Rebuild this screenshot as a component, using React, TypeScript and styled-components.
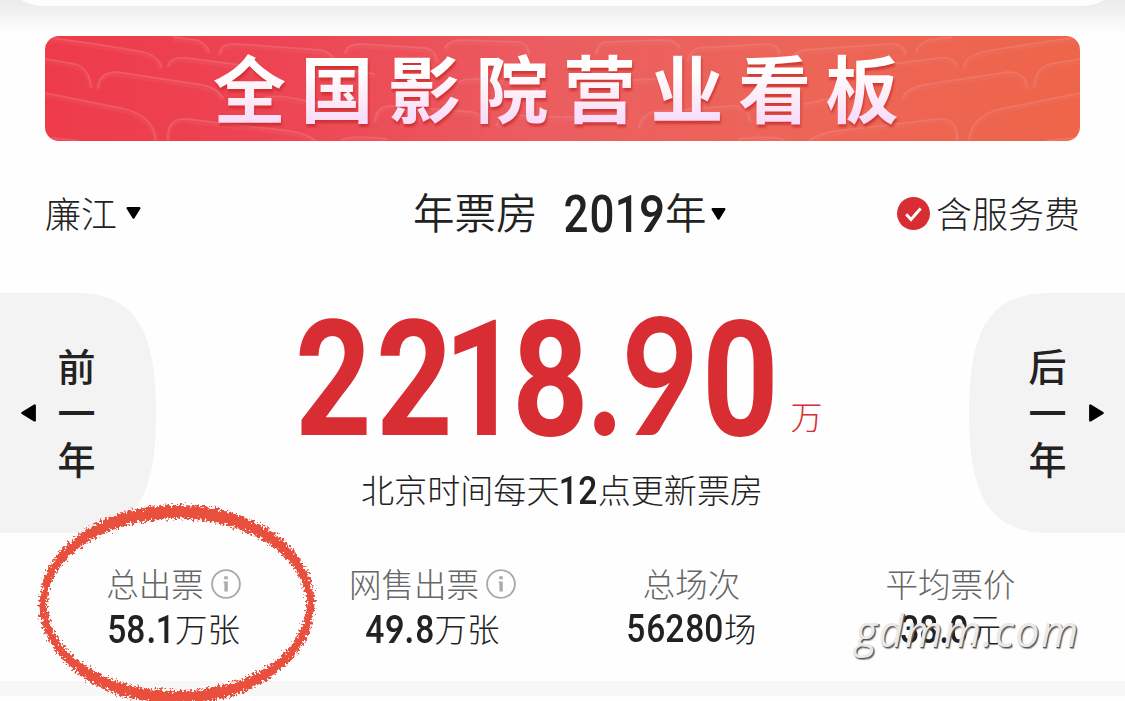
import React from "react";
import styled, { createGlobalStyle, css } from "styled-components";

const GlobalStyle = createGlobalStyle`
  * { box-sizing: border-box; }
  body {
    margin: 0;
    background: #fefefe;
    color: #222;
    font-family: "Noto Sans CJK SC", "Noto Sans", sans-serif;
    font-weight: 300;
    overflow: hidden;
  }
`;

const Page = styled.main`
  position: relative;
  width: 1125px;
  height: 701px;
  overflow: hidden;
  background: #fefefe;
`;

const TopShade = styled.header`
  height: 36px;
  padding: 0 4px;
  background: linear-gradient(#ececec 0, #efefef 8px, #fefefe 34px);
`;

const TopSheet = styled.div`
  height: 6px;
  overflow: hidden;
  display: flex;
  align-items: flex-end;
  &::before {
    content: "";
    flex: 1;
    height: 60px;
    flex-shrink: 0;
    background: #fefefe;
    border-radius: 0 0 38px 38px;
  }
`;

const Banner = styled.section`
  position: relative;
  height: 105px;
  margin: 0 45px;
  border-radius: 14px;
  background: linear-gradient(95deg, #ee3b4a 0%, #ed4453 22%, #eb5d60 48%, #ed6558 72%, #ee6549 100%);
`;

const SeatArt = styled.svg`
  position: absolute;
  inset: 0;
  width: 1035px;
  height: 105px;
  border-radius: 14px;
`;

const BannerTitle = styled.h1`
  position: relative;
  margin: 0;
  padding-left: 168px;
  height: 99px;
  font-size: 73px;
  line-height: 99px;
  font-weight: 700;
  letter-spacing: 14.5px;
  white-space: nowrap;
  color: transparent;
  background: linear-gradient(#fff 35%, #fdeef8 58%, #f9dcfb 85%);
  background-clip: text;
  -webkit-background-clip: text;
  filter: drop-shadow(1px 3px 1px rgba(196, 40, 36, 0.7));
`;

const FilterRow = styled.section`
  height: 152px;
  padding: 0 45px 7px;
  display: grid;
  grid-template-columns: 368px 1fr auto;
  align-items: center;
  line-height: 50px;
  white-space: nowrap;
`;

const Choice = styled.div<{ $size?: number; $weight?: number }>`
  display: flex;
  align-items: center;
  font-size: ${(p) => p.$size ?? 36}px;
  font-weight: ${(p) => p.$weight ?? 300};
`;

/* Han glyphs sit low in their line box; this lifts them onto the row's optical centre. */
const Han = styled.span`
  padding-bottom: 0.11em;
`;

const Gap = styled.span<{ $w: number }>`
  width: ${(p) => p.$w}px;
`;

const Hero = styled.section`
  height: 240px;
  display: grid;
  grid-template-columns: 156px 1fr 156px;
`;

const YearButton = styled.button<{ $side: "left" | "right" }>`
  height: 240px;
  border: 0;
  padding: 0 21px;
  background: #f3f3f3;
  color: #222;
  font: inherit;
  display: flex;
  align-items: center;
  gap: ${(p) => (p.$side === "left" ? 21 : 22)}px;
  clip-path: ${(p) =>
    p.$side === "left"
      ? 'path("M0 0H75C135 0 156 36 156 120C156 204 135 240 75 240H0Z")'
      : 'path("M156 0H81C21 0 0 36 0 120C0 204 21 240 81 240H156Z")'};
  ${(p) =>
    p.$side === "right" &&
    css`
      flex-direction: row-reverse;
    `}
`;

const VerticalLabel = styled.span`
  width: 39px;
  display: flex;
  flex-direction: column;
  align-items: center;
  padding-bottom: 3px;
  font-size: 38px;
  line-height: 46.5px;
  font-weight: 500;
`;

const Total = styled.div`
  display: flex;
  flex-direction: column;
`;

const Amount = styled.div`
  height: 168px;
  padding-left: 137px;
  display: flex;
  align-items: flex-end;
  color: #d72d33;
`;

const AmountUnit = styled.span`
  font-size: 32px;
  line-height: 40px;
  margin: 0 0 26px 10px;
`;

const UpdateNote = styled.div`
  padding-left: 205px;
  height: 60px;
  display: flex;
  align-items: center;
  font-size: 33.1px;
  white-space: nowrap;
`;

const Stats = styled.section`
  height: 148px;
  padding: 26px 44px 0;
  display: grid;
  grid-template-columns: repeat(4, 259px);
  white-space: nowrap;
`;

const Stat = styled.div`
  display: flex;
  flex-direction: column;
  align-items: center;
`;

const StatLabel = styled.div`
  height: 50px;
  display: flex;
  align-items: center;
  gap: 7px;
  color: #666;
  font-size: 32.5px;
`;

const StatValue = styled.div`
  height: 40px;
  display: flex;
  align-items: center;
  font-size: 32.5px;
  color: #222;
`;

const Divider = styled.div`
  height: 15px;
  background: #f7f7f7;
`;

const DigitRun = styled.span<{ $size: number; $weight: number }>`
  display: inline-flex;
  align-items: baseline;
  font-family: Roboto, "Liberation Sans", sans-serif;
  font-size: ${(p) => p.$size}px;
  font-weight: ${(p) => p.$weight};
  line-height: 1;
`;

const DigitCell = styled.span<{ $em: number; $scale: number; $lato: boolean }>`
  width: ${(p) => p.$em}em;
  display: flex;
  justify-content: center;
  transform: scaleX(${(p) => p.$scale});
  ${(p) =>
    p.$lato &&
    css`
      font-family: Lato, sans-serif;
      font-weight: 700;
    `}
`;

interface DigitsProps {
  value: string;
  size: number;
  weight?: number;
  cell?: number;
  one?: number;
  dot?: number;
  scale?: number;
}

function Digits({ value, size, weight = 500, cell = 0.5, one = 0.48, dot = 0.27, scale = 0.86 }: DigitsProps) {
  return (
    <DigitRun $size={size} $weight={weight}>
      {value.split("").map((ch, i) => (
        <DigitCell
          key={i}
          $em={ch === "." ? dot : ch === "1" ? one : cell}
          $scale={ch === "." ? 0.85 : scale}
          $lato={ch === "." || ch === "9"}
        >
          {ch}
        </DigitCell>
      ))}
    </DigitRun>
  );
}

const Ring = styled.svg`
  position: absolute;
  left: 20px;
  top: 490px;
  pointer-events: none;
`;

const Watermark = styled.div`
  position: absolute;
  left: 855px;
  top: 601px;
  font-family: "Open Sans", sans-serif;
  font-style: italic;
  font-weight: 400;
  font-size: 43px;
  line-height: 60px;
  letter-spacing: 1.3px;
  color: #e9e9e9;
  text-shadow: 1px 1px 0 #555, 1.5px 1.5px 1px rgba(60, 60, 60, 0.5);
  white-space: nowrap;
`;

const DownCaret = () => (
  <svg width="15" height="12" viewBox="0 0 15 12">
    <path d="M1.6 1.2H13.4L7.5 10.6Z" stroke="#000" strokeWidth="2.2" strokeLinejoin="round" />
  </svg>
);

const SideCaret = ({ right = false }: { right?: boolean }) => (
  <svg width="15" height="18" viewBox="0 0 15 18">
    <path d={right ? "M1.3 1.6V16.4L13.6 9Z" : "M13.7 1.6V16.4L1.4 9Z"} stroke="#000" strokeWidth="2.4" strokeLinejoin="round" />
  </svg>
);

const CheckBadge = () => (
  <svg width="33" height="33" viewBox="0 0 33 33">
    <circle cx="16.5" cy="16.5" r="16.5" fill="#d72d33" />
    <path d="M9.2 17.2L14 22.4L23.6 11.6" fill="none" stroke="#fff" strokeWidth="3" />
  </svg>
);

const InfoIcon = () => (
  <svg width="30" height="30" viewBox="0 0 30 30">
    <circle cx="15" cy="15" r="13.9" fill="none" stroke="#aaa" strokeWidth="1.9" />
    <path d="M13.2 7.2H16.8V10.2H13.2ZM12.6 12.4H16.8V22.6H13.4V14H12.6Z" fill="#aaa" />
  </svg>
);

const seatRows = [
  "M0 1Q60 9 98 16Q114 20 116 31",
  "M0 23L30 28Q44 32 46 51",
  "M53 52Q54 36 72 36L158 49Q172 52 178 62",
  "M0 57L80 73Q108 80 111 104",
  "M123 104Q122 81 142 83L245 95Q262 98 271 105",
  "M123 30Q126 20 142 22L196 29Q206 31 208 36",
  "M128 1L152 4Q162 8 164 16",
  "M175 18Q175 7 192 8L276 14Q289 17 290 28",
  "M300 17Q302 8 316 8L382 12Q391 15 392 25",
  "M218 62Q232 58 252 63L276 68",
  "M400 12Q404 4 416 4L476 6Q483 9 484 18",
  "M330 85Q332 68 350 70L428 76Q439 79 441 92",
  "M283 37Q300 33 330 38",
  "M296 104Q308 99 342 103",
  "M452 90Q454 78 468 79L517 81",
  "M410 50Q414 42 432 43L480 46Q492 48 494 58",
  "M2 102Q22 103 34 105",
];

const Seats = () => (
  <SeatArt viewBox="0 0 1035 105">
    {["", "translate(1035 0) scale(-1 1)"].map((transform) => (
      <g key={transform} transform={transform} fill="none" stroke="#f29a9e">
        {seatRows.map((d) => (
          <React.Fragment key={d}>
            <path d={d} strokeOpacity="0.09" strokeWidth="5" transform="translate(0 2)" />
            <path d={d} strokeOpacity="0.24" strokeWidth="1.8" />
          </React.Fragment>
        ))}
      </g>
    ))}
  </SeatArt>
);

const CrayonRing = () => (
  <Ring width="320" height="211" viewBox="20 490 320 211">
    <defs>
      <filter
        id="crayon"
        x="20"
        y="480"
        width="320"
        height="240"
        filterUnits="userSpaceOnUse"
        colorInterpolationFilters="sRGB"
      >
        <feTurbulence type="fractalNoise" baseFrequency="0.4" numOctaves="3" seed="4" result="fine" />
        <feDisplacementMap in="SourceGraphic" in2="fine" scale="11" xChannelSelector="R" yChannelSelector="G" />
      </filter>
    </defs>
    <path
      filter="url(#crayon)"
      fill="#e94f3d"
      fillRule="evenodd"
      d="M39.5 604A137.25 99 0 0 1 180 505A134.5 99 0 0 1 314.5 604A137.5 100 0 0 1 177 704A137.5 100 0 0 1 39.5 604ZM47 604A130 87 0 0 0 177 691A130 87 0 0 0 306.5 604A130 86 0 0 0 180 518.5A130 86 0 0 0 47 604Z"
    />
  </Ring>
);

const stats = [
  { label: "总出票", value: "58.1", unit: "万张", info: true },
  { label: "网售出票", value: "49.8", unit: "万张", info: true },
  { label: "总场次", value: "56280", unit: "场", info: false },
  { label: "平均票价", value: "38.0", unit: "元", info: false },
];

export default function App() {
  return (
    <Page>
      <GlobalStyle />
      <TopShade>
        <TopSheet />
      </TopShade>
      <Banner>
        <Seats />
        <BannerTitle>全国影院营业看板</BannerTitle>
      </Banner>
      <FilterRow>
        <Choice>
          <Han>廉江</Han>
          <Gap $w={9} />
          <DownCaret />
        </Choice>
        <Choice $size={41.5} $weight={350}>
          <Han>年票房</Han>
          <Gap $w={25} />
          <Digits value="2019" size={51} cell={0.51} one={0.48} />
          <Han>年</Han>
          <Gap $w={4} />
          <DownCaret />
        </Choice>
        <Choice>
          <CheckBadge />
          <Gap $w={6} />
          <Han>含服务费</Han>
        </Choice>
      </FilterRow>
      <Hero>
        <YearButton $side="left">
          <SideCaret />
          <VerticalLabel>
            <span>前</span>
            <span>一</span>
            <span>年</span>
          </VerticalLabel>
        </YearButton>
        <Total>
          <Amount>
            <Digits value="2218.90" size={162} weight={700} cell={0.497} one={0.345} dot={0.18} scale={0.825} />
            <AmountUnit>万</AmountUnit>
          </Amount>
          <UpdateNote>
            <Han>北京时间每天</Han>
            <Digits value="12" size={39} />
            <Han>点更新票房</Han>
          </UpdateNote>
        </Total>
        <YearButton $side="right">
          <SideCaret right />
          <VerticalLabel>
            <span>后</span>
            <span>一</span>
            <span>年</span>
          </VerticalLabel>
        </YearButton>
      </Hero>
      <Stats>
        {stats.map((s) => (
          <Stat key={s.label}>
            <StatLabel>
              <Han>{s.label}</Han>
              {s.info && <InfoIcon />}
            </StatLabel>
            <StatValue>
              <Digits value={s.value} size={39} />
              <Han>{s.unit}</Han>
            </StatValue>
          </Stat>
        ))}
      </Stats>
      <Divider />
      <CrayonRing />
      <Watermark>gdmm.com</Watermark>
    </Page>
  );
}
